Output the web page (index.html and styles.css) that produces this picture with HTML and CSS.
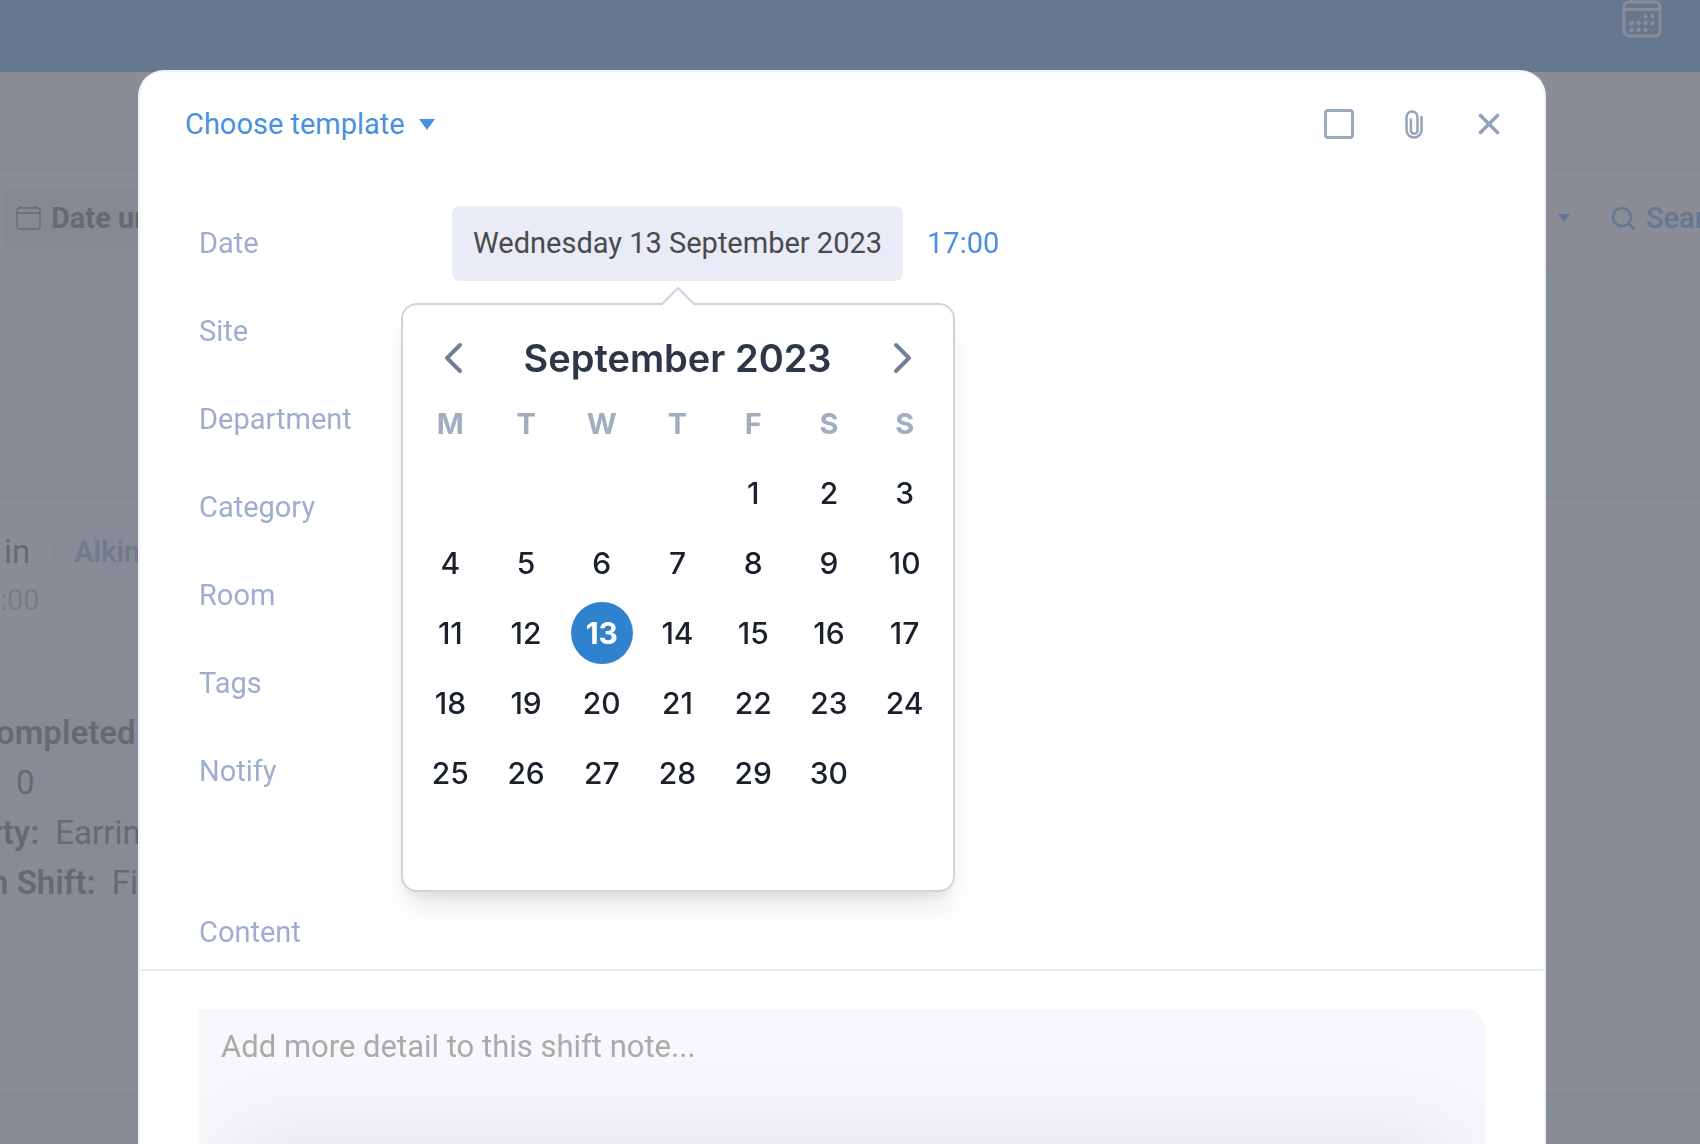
FILE: index.html
```html
<!DOCTYPE html>
<html lang="en">

<head>
  <meta charset="UTF-8">
  <meta name="viewport" content="width=device-width, initial-scale=1.0">
  <title>Shift Note</title>
  <link rel="stylesheet" href="styles.css">
</head>

<body>
  <!-- Page behind the dialog -->
  <div class="page">
    <header class="topbar">
      <svg class="topbar-icon" width="40" height="40" viewBox="0 0 40 40" fill="none" stroke="currentColor" stroke-width="3">
        <rect x="2" y="4" width="36" height="34" rx="5" />
        <path d="M2 11.5h36M10 0v4M31 0v4" />
        <g fill="currentColor" stroke="none">
          <circle cx="23.500" cy="18" r="2.200" />
          <circle cx="30.500" cy="18" r="2.200" />
          <circle cx="9.500" cy="25" r="2.200" />
          <circle cx="16.500" cy="25" r="2.200" />
          <circle cx="23.500" cy="25" r="2.200" />
          <circle cx="30.500" cy="25" r="2.200" />
          <circle cx="9.500" cy="32" r="2.200" />
          <circle cx="16.500" cy="32" r="2.200" />
          <circle cx="23.500" cy="32" r="2.200" />
        </g>
      </svg>
    </header>

    <div class="subbar"></div>

    <div class="filters">
      <button type="button" class="filter-date">
        <svg width="26" height="26" viewBox="0 0 26 26" fill="none" stroke="currentColor" stroke-width="1.3">
          <rect x="2" y="3" width="23" height="21" rx="3" />
          <path d="M2 8h23M6 1v2M20 1v2" />
        </svg>
        Date un
      </button>
      <div class="filter-search">
        <span class="caret small"></span>
        <button type="button" class="search-button">
          <svg width="26" height="26" viewBox="0 0 26 26" fill="none" stroke="currentColor" stroke-width="2.5" stroke-linecap="round">
            <circle cx="12" cy="12" r="9" />
            <path d="M19 19l5 5" />
          </svg>
          Sear
        </button>
      </div>
    </div>

    <div class="spacer"></div>

    <div class="note">
      <div class="note-head">
        <div class="note-title">in <span class="chip">Alkin</span></div>
        <div class="note-time">:00</div>
      </div>
      <div class="note-body">
        <div class="row done"><b>ompleted</b></div>
        <div class="row count">0</div>
        <div class="row"><b>rty:</b> Earrin</div>
        <div class="row"><b>n Shift:</b> Fi</div>
      </div>
    </div>

    <div class="divider"></div>
  </div>

  <!-- Dialog -->
  <div class="overlay">
    <div class="modal" role="dialog">
      <div class="modal-head">
        <button type="button" class="template-button">Choose template <span class="caret"></span></button>
        <div class="tools">
          <input type="checkbox" class="check" aria-label="Select">
          <button type="button" class="icon-button" aria-label="Attach">
            <svg width="22" height="32" viewBox="0 0 22 32" fill="none" stroke="currentColor" stroke-width="2.500" stroke-linecap="round">
              <path d="M18.500 9v13a7.500 7.500 0 0 1-15 0V9a5.500 5.500 0 0 1 11 0v13.500a3.300 3.300 0 0 1-6.600 0V11.500" />
            </svg>
          </button>
          <button type="button" class="icon-button" aria-label="Close">
            <svg width="22" height="22" viewBox="0 0 22 22" fill="none" stroke="currentColor" stroke-width="3.600" stroke-linecap="round">
              <path d="M2.500 2.500l17 17M19.500 2.500l-17 17" />
            </svg>
          </button>
        </div>
      </div>

      <div class="fields">
        <div class="field">
          <label for="date">Date</label>
          <div class="date-picker">
            <button type="button" id="date" class="date-button">Wednesday 13 September 2023</button>
            <div class="calendar">
              <svg class="calendar-arrow" width="36" height="20" viewBox="0 0 36 20">
                <path d="M0 20L18 2l18 18z" fill="#fff" />
                <path d="M1 19L18 2l17 17" fill="none" stroke="#cbd5e0" stroke-width="2" />
              </svg>
              <div class="calendar-head">
                <button type="button" class="nav-button" aria-label="Previous month">
                  <svg width="20" height="34" viewBox="0 0 20 34" fill="none" stroke="currentColor" stroke-width="4" stroke-linecap="round" stroke-linejoin="round">
                    <path d="M17 4L4 17l13 13" />
                  </svg>
                </button>
                <h2>September 2023</h2>
                <button type="button" class="nav-button" aria-label="Next month">
                  <svg width="20" height="34" viewBox="0 0 20 34" fill="none" stroke="currentColor" stroke-width="4" stroke-linecap="round" stroke-linejoin="round">
                    <path d="M3 4l13 13L3 30" />
                  </svg>
                </button>
              </div>
              <table>
                <thead>
                  <tr>
                    <th>M</th>
                    <th>T</th>
                    <th>W</th>
                    <th>T</th>
                    <th>F</th>
                    <th>S</th>
                    <th>S</th>
                  </tr>
                </thead>
                <tbody id="calendarDays">
                  <!-- Dynamic Rows -->
                </tbody>
              </table>
            </div>
          </div>
          <a href="#" class="time">17:00</a>
        </div>
        <div class="field"><span>Site</span></div>
        <div class="field"><span>Department</span></div>
        <div class="field"><span>Category</span></div>
        <div class="field"><span>Room</span></div>
        <div class="field"><span>Tags</span></div>
        <div class="field"><span>Notify</span></div>
      </div>

      <label for="content" class="content-label">Content</label>
      <div class="content-box">
        <textarea id="content" placeholder="Add more detail to this shift note..."></textarea>
      </div>
      <div class="modal-foot"></div>
    </div>
  </div>

  <script>
    const selectedDay = 13;
    const daysInMonth = 30;
    const firstColumn = 4; // the month starts on a Friday

    function loadDays() {
      const body = document.getElementById('calendarDays');
      body.innerHTML = '';
      for (let start = 1 - firstColumn; start <= daysInMonth; start += 7) {
        const row = document.createElement('tr');
        for (let day = start; day < start + 7; day++) {
          const cell = document.createElement('td');
          if (day >= 1 && day <= daysInMonth) {
            const selected = day === selectedDay ? ' selected' : '';
            cell.innerHTML = `<button type="button" class="day${selected}">${day}</button>`;
          }
          row.appendChild(cell);
        }
        body.appendChild(row);
      }
    }

    loadDays();
  </script>
</body>

</html>
```
FILE: styles.css
```css
* {
  box-sizing: border-box;
}

body {
  margin: 0;
  font-family: Roboto, 'Liberation Sans', sans-serif;
  font-size: 29px;
  line-height: 32px;
  color: #4a4a4a;
}

button {
  display: flex;
  align-items: center;
  padding: 0;
  border: none;
  background: none;
  font: inherit;
  color: inherit;
  cursor: pointer;
}

svg {
  display: block;
}

/* Page behind the dialog */
.page {
  height: 100vh;
  overflow: hidden;
  background-color: #fff;
}

.topbar {
  display: flex;
  justify-content: flex-end;
  height: 72px;
  padding-right: 38px;
  background-color: #4a90e2;
  color: #fff;
}

.topbar-icon {
  margin-top: -2px;
}

.subbar {
  height: 99px;
  border-bottom: 2px solid #ebecf6;
}

.filters {
  display: flex;
  justify-content: space-between;
  align-items: center;
  height: 96px;
  border-bottom: 2px solid #ebecf6;
}

.filter-date {
  gap: 10px;
  width: 200px;
  height: 60px;
  margin-left: 3px;
  padding-left: 12px;
  border-radius: 8px;
  background-color: #ebecf6;
  font-weight: bold;
}

.filter-search {
  display: flex;
  align-items: center;
  gap: 40px;
  margin-right: -5px;
  color: #4a90e2;
}

.search-button {
  gap: 10px;
  font-weight: 500;
}

.caret {
  border: 8px solid transparent;
  border-top: 11px solid #4a90e2;
  border-bottom: none;
}

.caret.small {
  border-width: 6px;
  border-top-width: 8px;
}

.spacer {
  height: 233px;
  background-color: #ecf4ff;
  border-bottom: 2px solid #ebecf6;
}

.note {
  height: 593px;
}

.note-head {
  height: 138px;
  padding-top: 22px;
}

.note-title {
  display: flex;
  align-items: center;
  gap: 22px;
  padding-left: 4px;
  font-size: 33px;
}

.chip {
  width: 160px;
  padding: 14px 22px;
  border-radius: 30px;
  background-color: #f1f2fa;
  color: #8c9bd4;
  font-size: 29px;
  font-weight: 600;
}

.note-time {
  margin-top: 2px;
  color: #aaa;
}

.note-body {
  width: 400px;
  height: 290px;
  margin-left: -10px;
  padding-top: 70px;
  background-color: #ecf4ff;
  font-size: 33px;
  line-height: 50px;
}

.row {
  white-space: nowrap;
}

.row b {
  margin-right: 8px;
  font-weight: 600;
}

.row.done {
  padding-left: 6px;
}

.row.count {
  padding-left: 26px;
}

.divider {
  height: 33px;
  border-top: 2px solid #ebecf6;
  border-bottom: 2px solid #ebecf6;
  background-color: #ecf4ff;
}

/* Dialog */
.overlay {
  position: fixed;
  inset: 0;
  display: flex;
  padding: 70px 154px 0 138px;
  overflow: hidden;
  background-color: rgba(109, 112, 124, 0.8);
}

.modal {
  display: flex;
  flex: 1;
  flex-direction: column;
  border: 2px solid #eef2fb;
  border-bottom: none;
  border-radius: 26px 26px 0 0;
  background-color: #fff;
}

.modal-head {
  display: flex;
  justify-content: space-between;
  align-items: center;
  height: 104px;
  padding: 0 40px 0 45px;
}

.template-button {
  gap: 14px;
  color: #4a90e2;
}

.tools {
  display: flex;
  align-items: center;
  gap: 45px;
  color: #94a3bb;
}

.check {
  appearance: none;
  width: 30px;
  height: 30px;
  margin: 0;
  border: 3px solid #9aa8c0;
  border-radius: 4px;
}

.icon-button {
  justify-content: center;
  width: 30px;
}

.fields {
  padding: 23px 59px 0;
  color: #9fadd1;
}

.field {
  display: grid;
  grid-template-columns: 253px auto 1fr;
  align-items: center;
  height: 88px;
}

.date-picker {
  position: relative;
}

.date-button {
  height: 75px;
  padding: 0 21px;
  border-radius: 8px;
  background-color: #e9ecf6;
  color: #4a4a4a;
}

.time {
  padding-left: 24px;
  color: #4a90e2;
  text-decoration: none;
}

.content-label {
  margin-top: 101px;
  padding: 0 59px 21px;
  border-bottom: 2px solid #e9edf8;
  color: #9fadd1;
}

.content-box {
  display: flex;
  flex: 1;
  padding: 38px 59px 0;
}

textarea {
  flex: 1;
  padding: 22px;
  border: none;
  border-radius: 0 20px 0 0;
  outline: none;
  resize: none;
  background-color: #f6f8fc;
  font: inherit;
  font-size: 31px;
}

textarea::placeholder {
  color: #aaa;
}

/* Sits just under the fold, only its shadow shows */
.modal-foot {
  height: 0;
  margin: 0 160px;
  box-shadow: 0 60px 90px 60px rgba(0, 0, 0, 0.1);
}

/* Calendar */
.calendar {
  position: absolute;
  top: calc(100% + 22px);
  left: 50%;
  width: 554px;
  height: 589px;
  padding: 21px 10px 0;
  transform: translateX(-50%);
  border: 2px solid #cbd5e0;
  border-radius: 16px;
  background-color: #fff;
  box-shadow: 0 20px 30px -6px rgba(0, 0, 0, 0.1), 0 8px 12px -4px rgba(0, 0, 0, 0.06);
  font-family: Inter, sans-serif;
  color: #1a202c;
}

.calendar-arrow {
  position: absolute;
  top: -19px;
  left: calc(50% - 18px);
}

.calendar-head {
  display: flex;
  justify-content: space-between;
  align-items: center;
  padding: 0 30px;
}

.calendar-head h2 {
  margin: 0;
  font-size: 38px;
  font-weight: 600;
  line-height: 64px;
  color: #2d3748;
}

.nav-button {
  color: #718096;
}

table {
  width: 100%;
  border-collapse: collapse;
  table-layout: fixed;
}

th {
  height: 68px;
  padding: 0;
  font-size: 29px;
  font-weight: bold;
  color: #a0aec0;
}

td {
  height: 70px;
  padding: 0;
}

.day {
  justify-content: center;
  width: 62px;
  height: 62px;
  margin: 0 auto;
  border-radius: 50%;
  font-size: 30px;
  font-weight: 500;
}

.day.selected {
  background-color: #3182ce;
  color: #fff;
  font-weight: bold;
}
```
